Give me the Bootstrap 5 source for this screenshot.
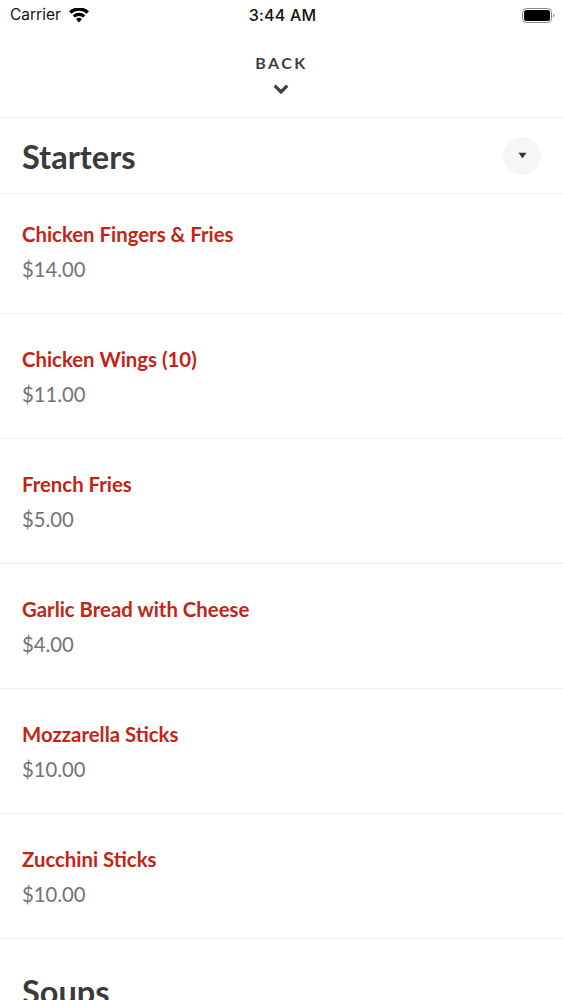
<!DOCTYPE html>
<html lang="en"><head><meta charset="utf-8">
<link href="https://cdn.jsdelivr.net/npm/bootstrap@5.3.0/dist/css/bootstrap.min.css" rel="stylesheet">
<style>
html,body{height:1000px;overflow:hidden;background:#fff}
body{font-family:Lato,"Liberation Sans",sans-serif;color:#3a3a3a}
.stat{height:30px;font-family:Inter,"Liberation Sans",Arial,sans-serif;font-size:15.500px;color:#111;padding:0 8px 0 10px}
.stat-l,.stat-r{flex:1 1 0}
.stat-t{font-size:16px;font-weight:500;letter-spacing:.2px}
.backbar{height:88px;padding-top:23px;border-bottom:1px solid #eee}
.backtxt{font-size:16px;font-weight:700;letter-spacing:2.400px;line-height:20px;color:#3f3f3f}
.chev{margin-top:11px;transform:translateX(-1px)}
.sect{height:76px;padding:0 22px;border-bottom:1px solid #eee}
.sect-t{font-size:32.500px;font-weight:700;color:#3a3a3a;margin:0;padding-top:2px;line-height:40px}
.toggle{width:38px;height:38px;border-radius:50%;background:#f6f5f7;border:0;padding:0}
.dish{height:125px;padding:31px 22px 0;border-bottom:1px solid #eee}
.dish-first{height:120px;padding-top:26px}
.dish-n{font-size:20.350px;font-weight:700;color:#c42415;line-height:28px}
.dish-p{font-size:20.300px;color:#747474;line-height:28px;margin-top:7px}
.sect-last{padding-top:31px}
</style></head><body>
<div class="stat d-flex align-items-center">
<div class="stat-l d-flex align-items-center gap-2"><span>Carrier</span>
<svg width="20" height="15" viewBox="0 0 20 15"><path d="M10 14.500 7 11a4.600 4.600 0 0 1 6 0Z M5.700 9.500 3.700 7.200a9.600 9.600 0 0 1 12.600 0L14.300 9.500a6.600 6.600 0 0 0-8.600 0Z M2.300 5.700 0 3.300a14.800 14.800 0 0 1 20 0L17.700 5.700a11.500 11.500 0 0 0-15.400 0Z" fill="#000"/></svg></div>
<div class="stat-t">3:44 AM</div>
<div class="stat-r d-flex justify-content-end"><svg width="33" height="15" viewBox="0 0 33 15"><rect x=".5" y=".5" width="29" height="14" rx="4" fill="none" stroke="#888"/><rect x="2" y="2" width="26" height="11" rx="2.500" fill="#000"/><path d="M31 5.500v4c.9-.3 1.500-1.100 1.500-2s-.6-1.700-1.500-2z" fill="#999"/></svg></div>
</div>
<div class="backbar text-center"><div class="backtxt">BACK</div>
<svg class="chev d-block mx-auto" width="16" height="10" viewBox="0 0 16 10"><path d="M1.700 1.700 8 8l6.300-6.300" fill="none" stroke="#3f3f3f" stroke-width="3.200"/></svg></div>
<div class="sect d-flex align-items-center justify-content-between"><h2 class="sect-t">Starters</h2>
<button class="toggle d-flex align-items-center justify-content-center" aria-label="Collapse"><svg width="9" height="7" viewBox="0 0 10 7"><path d="M.5.500h9L5 6.500z" fill="#333"/></svg></button></div>
<div class="dish dish-first"><div class="dish-n">Chicken Fingers &amp; Fries</div><div class="dish-p">$14.00</div></div>
<div class="dish"><div class="dish-n">Chicken Wings (10)</div><div class="dish-p">$11.00</div></div>
<div class="dish"><div class="dish-n">French Fries</div><div class="dish-p">$5.00</div></div>
<div class="dish"><div class="dish-n">Garlic Bread with Cheese</div><div class="dish-p">$4.00</div></div>
<div class="dish"><div class="dish-n">Mozzarella Sticks</div><div class="dish-p">$10.00</div></div>
<div class="dish"><div class="dish-n">Zucchini Sticks</div><div class="dish-p">$10.00</div></div>
<div class="sect sect-last d-flex align-items-start"><h2 class="sect-t">Soups</h2></div>
<script src="https://cdn.jsdelivr.net/npm/bootstrap@5.3.0/dist/js/bootstrap.bundle.min.js"></script>
</body></html>
